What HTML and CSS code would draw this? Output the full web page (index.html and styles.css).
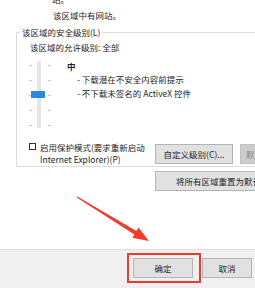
FILE: index.html
```html
<!DOCTYPE html>
<html lang="zh-CN">

<head>
    <meta charset="UTF-8">
    <meta name="viewport" content="width=device-width, initial-scale=1.0">
    <title>安全设置</title>
    <link rel="stylesheet" href="styles.css">
</head>

<body>
    <div class="cut"><span>站。</span></div>
    <div class="info">该区域中有网站。</div>

    <fieldset class="group">
        <legend>该区域的安全级别(L)</legend>
        <div class="allowed">该区域的允许级别: 全部</div>
        <div class="level">
            <div class="slider">
                <div class="track"></div>
                <div class="thumb"></div>
            </div>
            <div class="level-text">
                <div class="level-name">中</div>
                <div class="level-item">- 下载潜在不安全内容前提示</div>
                <div class="level-item">- 不下载未签名的 ActiveX 控件</div>
            </div>
        </div>
        <div class="options">
            <label class="protect">
                <span class="box"></span>
                <span>启用保护模式(要求重新启动<br>Internet Explorer)(P)</span>
            </label>
            <button class="btn custom">自定义级别(C)...</button>
            <button class="btn disabled">默认级别(D)</button>
        </div>
    </fieldset>

    <div class="reset-row">
        <button class="btn reset">将所有区域重置为默认级别(R)</button>
    </div>

    <div class="footer">
        <div class="highlight">
            <button class="btn ok">确定</button>
        </div>
        <button class="btn cancel">取消</button>
        <button class="btn apply">应用(A)</button>
    </div>

    <svg class="arrow" width="255" height="288" viewBox="0 0 255 288">
        <polygon points="77.3,196.6 136.4,231 138.5,227.6 149,241 132.3,237.8 134.4,234.4 76.7,197.4" fill="#f23a2f" />
    </svg>
</body>

</html>
```

FILE: styles.css
```css
* {
    box-sizing: border-box;
}

body {
    margin: 0;
    width: 255px;
    height: 288px;
    overflow: hidden;
    position: relative;
    display: flex;
    flex-direction: column;
    background-color: #fff;
    color: #1e1e1e;
    font-family: "Microsoft YaHei", "Noto Sans CJK SC", sans-serif;
    font-size: 8.5px;
}

.cut {
    height: 4px;
    overflow: hidden;
    padding-left: 52px;
}

.cut span {
    display: block;
    line-height: 14px;
    margin-top: -8px;
}

.info {
    margin-top: 4px;
    padding-left: 53px;
    line-height: 14px;
}

.group {
    margin: 4px -40px 0 16px;
    padding: 0 0 1px 3px;
    border: 1px solid #dcdcdc;
    min-width: 0;
}

.group legend {
    padding: 0 2px;
    line-height: 12px;
}

.allowed {
    margin-top: 3px;
    padding-left: 10px;
    line-height: 12px;
}

.level {
    display: flex;
    padding-left: 9px;
}

.slider {
    position: relative;
    flex-shrink: 0;
    width: 22px;
    height: 67px;
    margin-top: 8px;
    background-image:
        repeating-linear-gradient(to bottom, transparent 0 4px, #c8c8c8 4px 5px, transparent 5px 15px),
        repeating-linear-gradient(to bottom, transparent 0 4px, #c8c8c8 4px 5px, transparent 5px 15px);
    background-size: 3px 100%, 3px 100%;
    background-position: 0 0, 19px 0;
    background-repeat: no-repeat;
}

.track {
    width: 4px;
    height: 100%;
    margin-left: 8px;
    background-color: #e6e6e6;
}

.thumb {
    position: absolute;
    left: 2px;
    top: 30px;
    width: 14px;
    height: 7px;
    background-color: #2b88e0;
}

.level-text {
    margin-left: 16px;
    margin-top: 7px;
    white-space: nowrap;
}

.level-name {
    font-weight: bold;
    line-height: 12px;
}

.level-item {
    padding-left: 10px;
    line-height: 14px;
}

.options {
    display: flex;
    align-items: flex-start;
    margin-top: 13px;
    padding-left: 9px;
}

.protect {
    display: flex;
    flex-shrink: 0;
    width: 126px;
    line-height: 12px;
    white-space: nowrap;
}

.box {
    width: 7px;
    height: 7px;
    margin-top: 2px;
    margin-right: 4px;
    border: 1px solid #333;
    background-color: #fff;
    flex-shrink: 0;
}

.btn {
    flex-shrink: 0;
    height: 20px;
    margin: 0;
    padding: 0;
    font: inherit;
    color: #1e1e1e;
    background-color: #e1e1e1;
    border: 1px solid #b4b4b4;
    white-space: nowrap;
}

.custom {
    width: 78px;
    margin-top: 3px;
}

.disabled {
    width: 78px;
    margin-top: 3px;
    margin-left: 7px;
    padding: 0 5px;
    text-align: left;
    color: #8a8a8a;
    background-color: #cccccc;
    border-color: #c2c2c2;
}

.reset-row {
    display: flex;
    margin-top: 4px;
    padding-left: 155px;
}

.reset {
    padding: 0 20px;
}

.footer {
    display: flex;
    flex-shrink: 0;
    align-items: flex-start;
    margin-top: auto;
    height: 39px;
    padding: 3px 0 0 127px;
    border-top: 1px solid #dfdfdf;
    background-color: #f0f0f0;
}

.highlight {
    flex-shrink: 0;
    padding: 3px 6px 3px 4px;
    border: 2px solid #f03a30;
}

.ok {
    width: 60px;
}

.cancel {
    width: 50px;
    margin-left: 1px;
    margin-top: 5px;
}

.apply {
    width: 60px;
    margin-left: 5px;
    margin-top: 5px;
}

.arrow {
    position: absolute;
    left: 0;
    top: 0;
    pointer-events: none;
}
```
